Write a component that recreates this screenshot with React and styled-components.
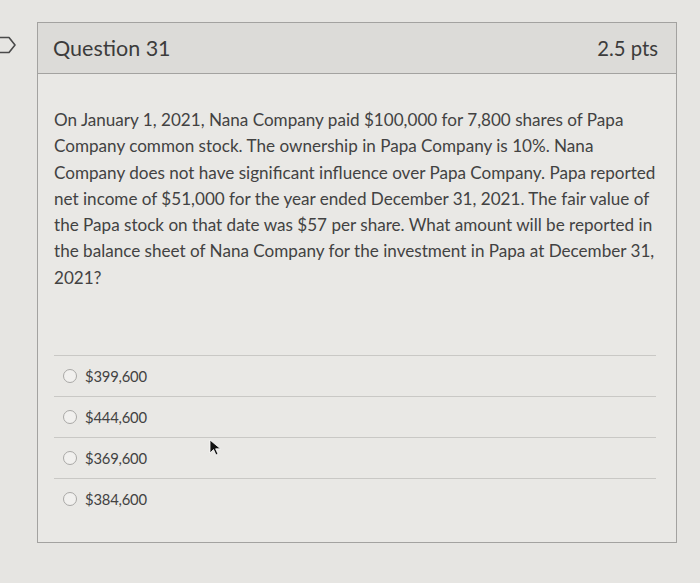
import React from "react";
import styled, { createGlobalStyle } from "styled-components";

const GlobalStyle = createGlobalStyle`
  html, body {
    margin: 0;
    padding: 0;
    background: #e6e5e2;
    font-family: Lato, "Open Sans", sans-serif;
  }
`;

const Page = styled.div`
  position: relative;
  width: 700px;
  height: 583px;
  padding-top: 22px;
  box-sizing: border-box;
  overflow: hidden;
`;

const Bookmark = styled.svg`
  position: absolute;
  left: -6px;
  top: 36px;
`;

const Cursor = styled.svg`
  position: absolute;
  left: 209px;
  top: 439px;
`;

const Card = styled.div`
  margin-left: 37px;
  width: 640px;
  box-sizing: border-box;
  border: 1px solid #a3a2a0;
`;

const Header = styled.div`
  height: 50px;
  display: flex;
  align-items: center;
  justify-content: space-between;
  padding: 0 18px 0 15px;
  background: #dcdbd8;
  border-bottom: 1px solid #a3a2a0;
  color: #3c3c3c;

  h2 {
    margin: 0;
    font-size: 21.5px;
    font-weight: 400;
  }
  span {
    font-size: 20.3px;
  }
`;

const Body = styled.div`
  background: #e9e8e5;
  padding: 33px 16px 23px 16px;
`;

const Question = styled.p`
  margin: 0 0 64px;
  font-size: 17.1px;
  line-height: 26.3px;
  color: #424242;
  white-space: nowrap;
`;

const Answers = styled.div`
  display: flex;
  flex-direction: column;
  margin-right: 4px;
`;

const Answer = styled.label`
  height: 40px;
  display: flex;
  align-items: center;
  gap: 8px;
  padding-left: 9px;
  border-top: 1px solid #c9c8c5;
  font-size: 14.8px;
  color: #424242;
  letter-spacing: -0.2px;
`;

const Radio = styled.span`
  width: 12px;
  height: 12px;
  border-radius: 50%;
  border: 1px solid #a9a8a6;
  background: #f1f0ee;
`;

const answers = ["$399,600", "$444,600", "$369,600", "$384,600"];

export default function App() {
  return (
    <Page>
      <GlobalStyle />
      <Bookmark width="24" height="18" viewBox="0 0 24 18">
        <path
          d="M1 1.5 H15 L21 9 L15 16.5 H1 Z"
          fill="none"
          stroke="#4a4a4a"
          strokeWidth="1.6"
          strokeLinejoin="round"
        />
      </Bookmark>
      <Card>
        <Header>
          <h2>Question 31</h2>
          <span>2.5 pts</span>
        </Header>
        <Body>
          <Question>
            On January 1, 2021, Nana Company paid $100,000 for 7,800 shares of Papa
            <br />
            Company common stock. The ownership in Papa Company is 10%. Nana
            <br />
            Company does not have significant influence over Papa Company. Papa reported
            <br />
            net income of $51,000 for the year ended December 31, 2021. The fair value of
            <br />
            the Papa stock on that date was $57 per share. What amount will be reported in
            <br />
            the balance sheet of Nana Company for the investment in Papa at December 31,
            <br />
            2021?
          </Question>
          <Answers>
            {answers.map((a) => (
              <Answer key={a}>
                <Radio />
                {a}
              </Answer>
            ))}
          </Answers>
        </Body>
      </Card>
      <Cursor width="14" height="18" viewBox="0 0 14 18">
        <path d="M1 1 L1 14 L4.5 10.5 L7 16 L9 15 L6.6 9.8 L11.5 9.8 Z" fill="#111" stroke="#fff" strokeWidth="0.8" />
      </Cursor>
    </Page>
  );
}
